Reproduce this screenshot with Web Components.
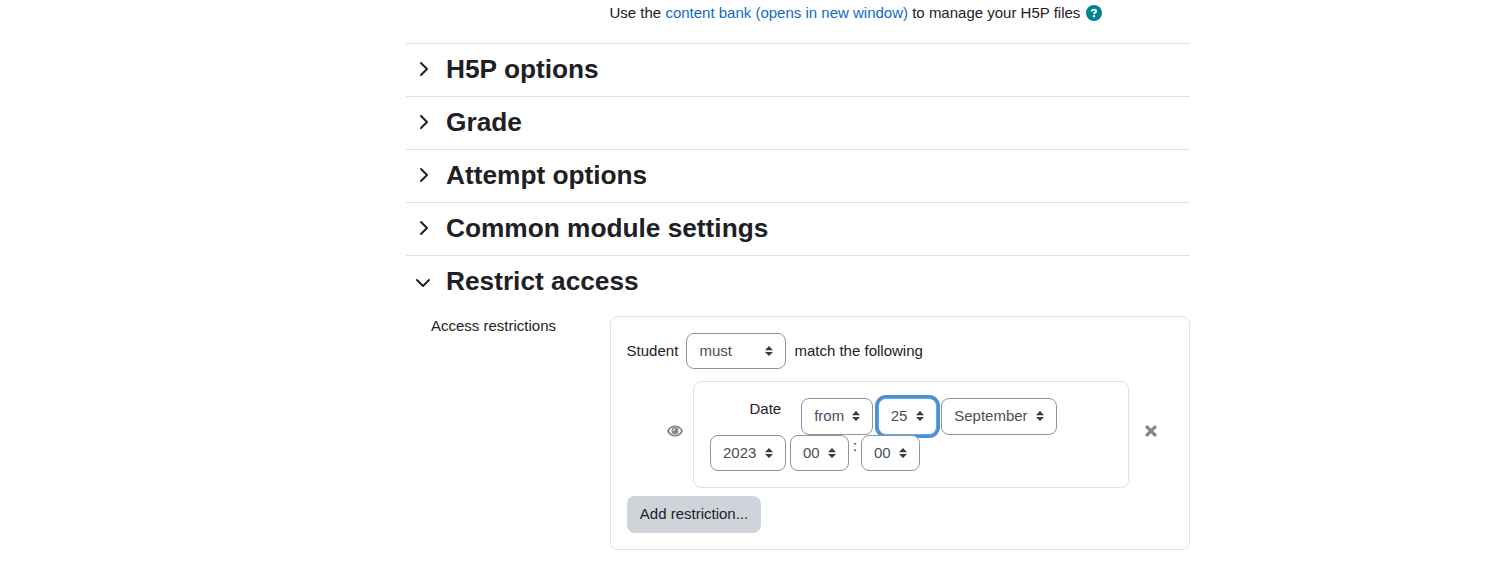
<!DOCTYPE html>
<html lang="en"><head><meta charset="utf-8"><title>Activity settings</title>
<style>
body{margin:0;height:562px;overflow:hidden;background:#fff;color:#1d2125;font:15px/22.5px "Liberation Sans",Arial,sans-serif}
</style></head><body>
<settings-form></settings-form>
<script>
const define=(name,html)=>customElements.define(name,class extends HTMLElement{
  constructor(){super();this.attachShadow({mode:'open'}).innerHTML=html;}
});
const ICONS={
  right:['0 0 18 18','<path d="M6 3l6 6-6 6" fill="none" stroke="currentColor" stroke-width="2" stroke-linecap="round" stroke-linejoin="round"/>'],
  down:['0 0 18 18','<path d="M2 7l6 6 6-6" fill="none" stroke="currentColor" stroke-width="2" stroke-linecap="round" stroke-linejoin="round"/>'],
  help:['0 0 16 16','<circle cx="8" cy="8" r="8" fill="currentColor"/><path d="M5.700 6.300C6 4 10.200 4.200 10.100 6.300C10.100 7.700 8 7.500 8 9.100" fill="none" stroke="#fff" stroke-width="2"/><path d="M6.900 10.200h2.200v2.100H6.900z" fill="#fff"/>'],
  eye:['0 0 16 16','<path d="M.9 8C4 1.800 12 1.800 15.100 8C12 14.200 4 14.200 .9 8z" fill="none" stroke="currentColor" stroke-width="1.700" stroke-linejoin="round"/><circle cx="8" cy="7.700" r="3.500" fill="currentColor"/><path d="M6.200 7.700A1.800 1.800 0 0 1 8 5.900" fill="none" stroke="#fff" stroke-width="1" stroke-linecap="round"/>'],
  close:['0 0 12 12','<path d="M2.100 2.100l7.800 7.800M9.900 2.100l-7.800 7.800" stroke="currentColor" stroke-width="3.300" stroke-linecap="round"/>']
};
customElements.define('ui-icon',class extends HTMLElement{
  constructor(){super();this.attachShadow({mode:'open'});}
  connectedCallback(){
    const [box,shape]=ICONS[this.getAttribute('name')];
    this.shadowRoot.innerHTML=`<style>:host{display:block;width:16px;height:16px;flex:none}svg{display:block;width:100%;height:100%}</style><svg viewBox="${box}" aria-hidden="true">${shape}</svg>`;
  }
});
define('form-section',`<style>
:host{display:block;border-top:1px solid #dee2e6}
.head{display:flex;align-items:center;height:50px;padding-bottom:2px}
ui-icon{width:18px;height:18px;margin:0 13px 0 9px}
.down{margin-top:2px}
:host([open]) .right,:host(:not([open])) .down{display:none}
h3{margin:0;font-size:26.25px;line-height:32px;font-weight:700}
</style><div class="head"><ui-icon class="right" name="right"></ui-icon><ui-icon class="down" name="down"></ui-icon><h3><slot name="title"></slot></h3></div><slot></slot>`);
define('select-box',`<style>
:host{display:inline-flex;box-sizing:border-box;align-items:center;justify-content:space-between;width:var(--w);height:36.5px;padding:0 12px;border:1px solid #8f959e;border-radius:8px;background:#fff;color:#495057}
:host([focused]){border-color:#5babf2;box-shadow:0 0 0 3px rgba(15,108,191,.75)}
svg{width:8px;height:10px}
</style><slot></slot><svg viewBox="0 0 8 10"><path fill="#343a40" d="M4 0L0 4.300h8zm0 10L0 5.900h8z"/></svg>`);
define('date-condition',`<style>
:host{display:block;box-sizing:border-box;width:436px;height:107px;border:1px solid #dee2e6;border-radius:8px;padding:16px}
.row{display:flex;align-items:flex-start;gap:4px;height:36.5px}
.label{margin:0 16px 0 39.500px}
.colon{width:4px}
</style>
<div class="row"><span class="label">Date</span><select-box style="--w:72px">from</select-box><select-box focused style="--w:59px;margin-left:1px;padding-left:11.500px;padding-right:12px">25</select-box><select-box style="--w:116px">September</select-box></div>
<div class="row"><select-box style="--w:76px">2023</select-box><select-box style="--w:59px">00</select-box><span class="colon">:</span><select-box style="--w:59px">00</select-box></div>`);
define('access-restrictions',`<style>
:host{display:block;box-sizing:border-box;width:580px;height:234px;border:1px solid #dee2e6;border-radius:8px;padding:16px}
.match{display:flex;align-items:center;height:36px;gap:8px}
.match span:first-child{margin:0 -.4px 0 -.4px}
.match span:last-child{margin-left:.5px}
.match select-box{height:36px;padding-left:12.500px}
.item{display:flex;align-items:flex-start;margin:12px 0 8px 40px}
ui-icon{color:#868686}
.eye{margin:42px 10px 0 0}.close{margin:44px 0 0 16px;width:12px;height:12px}
button{display:block;height:37px;width:134px;padding:0;border:0;border-radius:8px;background:#ced4da;color:#1d2125;font:inherit}
</style>
<div class="match"><span>Student</span><select-box style="--w:100px">must</select-box><span>match the following</span></div>
<div class="item"><ui-icon class="eye" name="eye"></ui-icon><date-condition></date-condition><ui-icon class="close" name="close"></ui-icon></div>
<button>Add restriction...</button>`);
define('settings-form',`<style>
:host{display:block;width:784px;margin-left:406px}
.intro{display:flex;height:43px;box-sizing:border-box;padding:2px 0 0 203.500px;white-space:pre}
a{color:#0f6cbf;text-decoration:none}
.intro ui-icon{color:#008196;margin:3px 0 0 5.500px}
.field{display:flex;padding-top:8px}
.field span{width:179px;margin:-1px 0 0 25px}
</style>
<div class="intro"><span>Use the <a href="#">content bank (opens in new window)</a> to manage your H5P files</span><ui-icon name="help"></ui-icon></div>
<form-section><span slot="title">H5P options</span></form-section>
<form-section><span slot="title">Grade</span></form-section>
<form-section><span slot="title">Attempt options</span></form-section>
<form-section><span slot="title">Common module settings</span></form-section>
<form-section open><span slot="title">Restrict access</span><div class="field"><span>Access restrictions</span><access-restrictions></access-restrictions></div></form-section>`);
</script></body></html>
